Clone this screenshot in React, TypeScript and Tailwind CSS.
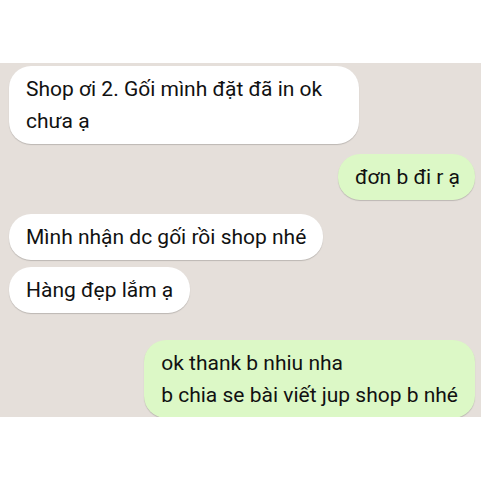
const Bubble = ({ side, className, children }: { side: "in" | "out"; className?: string; children: React.ReactNode }) => {
  const color = side === "in" ? "bg-white" : "bg-[#dcf8c6]";
  return (
    <div
      className={`${color} ${className ?? ""} rounded-[22px] px-[17px] py-[7px] text-[21px] leading-[32px] text-[#111] shadow-[0_1px_1px_rgba(0,0,0,0.18)]`}
    >
      {children}
    </div>
  );
};

export default function App() {
  return (
    <div className="w-[481px] h-[481px] bg-white font-['Roboto',sans-serif] flex flex-col">
      <div className="h-[63px]" />
      <div className="h-[354px] bg-[#e5dfda] overflow-hidden flex flex-col pt-[3px] pl-[9px] pr-[6px]">
        <Bubble side="in" className="self-start w-[350px]">
          Shop ơi 2. Gối mình đặt đã in ok chưa ạ
        </Bubble>
        <Bubble side="out" className="self-end mt-[10px] pr-[15px]">
          đơn b đi r ạ
        </Bubble>
        <Bubble side="in" className="self-start mt-[14px]">
          Mình nhận dc gối rồi shop nhé
        </Bubble>
        <Bubble side="in" className="self-start mt-[7px]">
          Hàng đẹp lắm ạ
        </Bubble>
        <Bubble side="out" className="self-end mt-[27px] shrink-0">
          <div>ok thank b nhiu nha</div>
          <div>b chia se bài viết jup shop b nhé</div>
        </Bubble>
      </div>
    </div>
  );
}
